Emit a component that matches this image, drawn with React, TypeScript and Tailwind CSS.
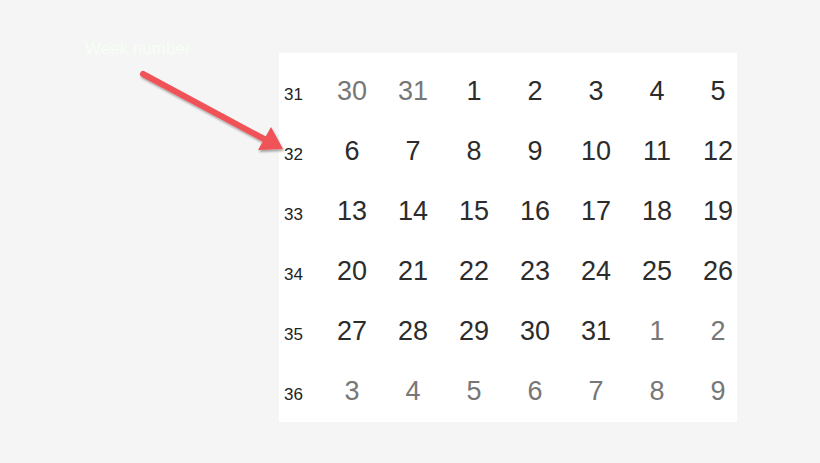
import React from 'react';

const weeks = [
  { n: 31, days: [30, 31, 1, 2, 3, 4, 5], outBefore: 2, outAfter: 7 },
  { n: 32, days: [6, 7, 8, 9, 10, 11, 12], outBefore: 0, outAfter: 7 },
  { n: 33, days: [13, 14, 15, 16, 17, 18, 19], outBefore: 0, outAfter: 7 },
  { n: 34, days: [20, 21, 22, 23, 24, 25, 26], outBefore: 0, outAfter: 7 },
  { n: 35, days: [27, 28, 29, 30, 31, 1, 2], outBefore: 0, outAfter: 5 },
  { n: 36, days: [3, 4, 5, 6, 7, 8, 9], outBefore: 0, outAfter: 0 },
];

const App: React.FC = () => {
  return (
    <div className="relative w-[820px] h-[463px] bg-[#f5f5f5] font-['Liberation_Sans',Arial,sans-serif] overflow-hidden">
      <div className="absolute left-[85px] top-[36px] text-[17px] text-[#f6fff4]">Week number</div>

      <div className="pt-[53px] pl-[279px]">
        <div className="w-[458px] h-[369px] bg-white pt-[8px] pl-[5px]">
          {weeks.map((w) => (
            <div key={w.n} className="flex items-baseline h-[60px] pt-[15px]">
              <span className="w-[50px] text-[17px] text-[#222]">{w.n}</span>
              <div className="flex gap-[25px]">
                {w.days.map((d, i) => {
                  const out = i < w.outBefore || i >= w.outAfter;
                  return (
                    <span
                      key={i}
                      className={`w-9 text-center text-[27px] leading-[30px] ${out ? 'text-[#777]' : 'text-[#2c2c2c]'}`}
                    >
                      {d}
                    </span>
                  );
                })}
              </div>
            </div>
          ))}
        </div>
      </div>

      <svg className="absolute left-0 top-0" width="820" height="463" viewBox="0 0 820 463">
        <defs>
          <filter id="sh" x="-20%" y="-20%" width="140%" height="140%">
            <feDropShadow dx="1" dy="2" stdDeviation="1.2" floodColor="#000" floodOpacity="0.35" />
          </filter>
        </defs>
        <g filter="url(#sh)">
          <line x1="143" y1="74" x2="266" y2="140" stroke="#ef5258" strokeWidth="6" strokeLinecap="round" />
          <polygon points="283,149 258,150 271,127" fill="#ef5258" />
        </g>
      </svg>
    </div>
  );
};

export default App;
